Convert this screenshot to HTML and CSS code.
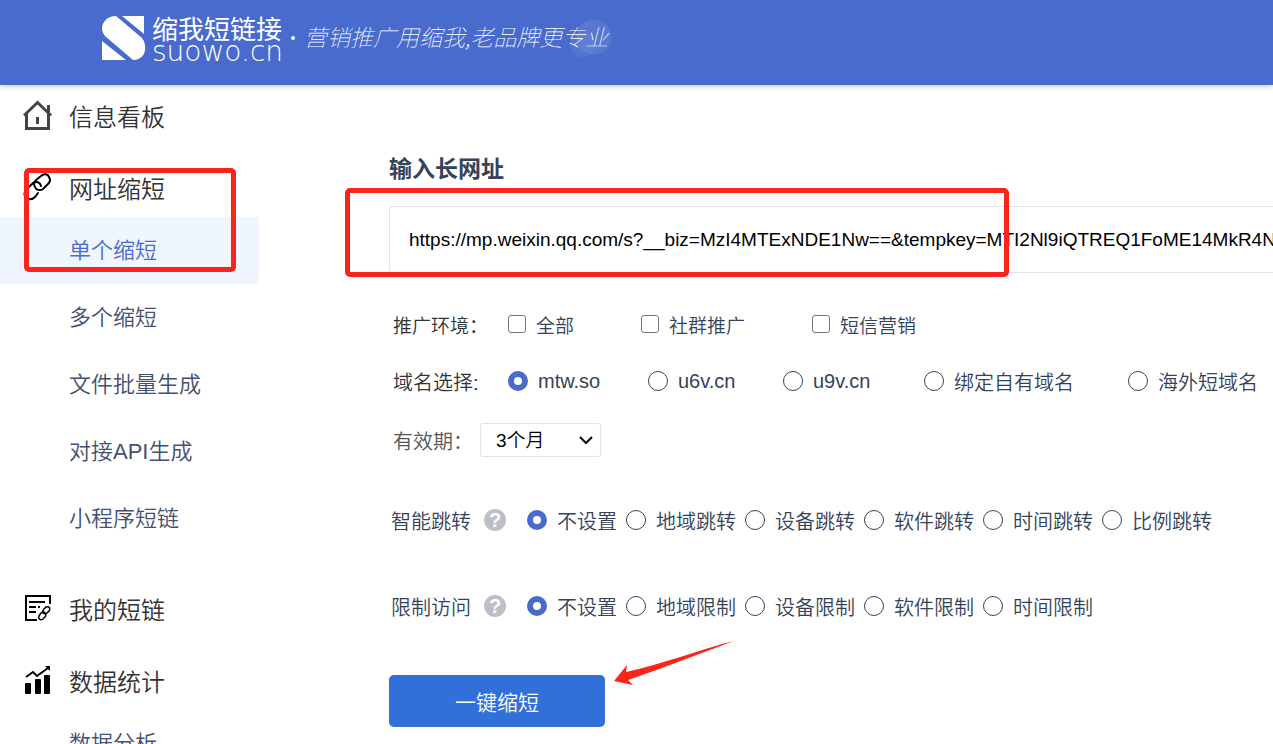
FILE: index.html
```html
<!DOCTYPE html>
<html lang="zh-CN">
<head>
<meta charset="UTF-8">
<meta name="viewport" content="width=device-width, initial-scale=1.0">
<title>缩我短链接</title>
<link rel="stylesheet" href="styles.css">
</head>
<body>

<header class="header">
    <a class="logo" href="#">
        <svg class="logo-mark" width="44" height="44" viewBox="0 0 44 44" fill="#fff">
            <path d="M20 0H42V18Z"/>
            <path d="M14 0L40 22C46 30 44 44 31 44L3 20C-4 12 2 0 14 0Z"/>
            <path d="M0 25L24 44H0Z"/>
        </svg>
        <span class="logo-text">
            <span class="logo-cn">缩我短链接</span>
            <span class="logo-en">suowo.cn</span>
        </span>
    </a>
    <span class="dot"></span>
    <p class="slogan">营销推广用缩我,老品牌更专业</p>
</header>

<div class="layout">
    <nav class="sidebar">
        <a class="menu-title" href="#">
            <svg width="30" height="30" viewBox="0 0 30 30" fill="none" stroke="#444" stroke-width="3">
                <path d="M1 15.500L14.500 2.500L28 15.500"/>
                <path d="M3.500 13V28.500H25.500V13M25.500 5V12"/>
                <path d="M14.500 17V24"/>
            </svg>
            信息看板
        </a>
        <a class="menu-title" href="#">
            <svg width="30" height="30" viewBox="0 0 30 30" fill="none" stroke="#000" stroke-width="2" stroke-linecap="round">
                <path d="M12 15C10 12 11 10 13 8L18 4C21 1 25 2 26 5C28 8 27 10 25 12L20 17C17 19 13 18 12 15"/>
                <path d="M18 14C17 10 13 9 10 11L4 17C1 20 1 23 3 25C5 28 9 28 12 25L15 21"/>
            </svg>
            网址缩短
        </a>
        <ul class="submenu">
            <li><a class="active" href="#">单个缩短</a></li>
            <li><a href="#">多个缩短</a></li>
            <li><a href="#">文件批量生成</a></li>
            <li><a href="#">对接API生成</a></li>
            <li><a href="#">小程序短链</a></li>
        </ul>
        <a class="menu-title" href="#">
            <svg width="30" height="30" viewBox="0 0 30 30" fill="none" stroke="#000" stroke-width="2">
                <path d="M14 27H3V3H27V11"/>
                <path d="M6 9H22M6 14H13M15 14H17M6 19H13"/>
                <path d="M20 20C19 18 20 17 21 16L23 14C26 13 28 15 26 18L24 20C23 21 21 21 20 20Z" stroke-width="1.500"/>
                <path d="M22 20C21 18 19 19 18 20L16 23C15 25 17 28 20 26L22 24C23 23 23 21 22 20Z" stroke-width="1.500"/>
            </svg>
            我的短链
        </a>
        <a class="menu-title" href="#">
            <svg width="30" height="30" viewBox="0 0 30 30" fill="#000">
                <rect x="2" y="18" width="6" height="11" rx="1"/>
                <rect x="12" y="14" width="6" height="15" rx="1"/>
                <rect x="21" y="10" width="6" height="19" rx="1"/>
                <path d="M3 12L10 7L14 11L25 3" fill="none" stroke="#000" stroke-width="2"/>
                <path d="M22 1H27V6Z"/>
            </svg>
            数据统计
        </a>
        <ul class="submenu">
            <li><a href="#">数据分析</a></li>
        </ul>
        <div class="mark mark-menu"></div>
    </nav>

    <main class="main">
        <form class="form">
            <label class="form-title" for="longUrl">输入长网址</label>
            <div class="url-box">
                <input type="text" id="longUrl" name="longUrl" value="https://mp.weixin.qq.com/s?__biz=MzI4MTExNDE1Nw==&amp;tempkey=MTI2Nl9iQTREQ1FoME14MkR4NXZKb2Rk">
                <div class="mark mark-url"></div>
            </div>

            <div class="row row-env">
                <span class="name">推广环境：</span>
                <div class="envs">
                    <label><input type="checkbox" name="env">全部</label>
                    <label><input type="checkbox" name="env">社群推广</label>
                    <label><input type="checkbox" name="env">短信营销</label>
                </div>
            </div>

            <div class="row row-domain">
                <span class="name">域名选择:</span>
                <div class="domains">
                    <label><input type="radio" name="domain" checked>mtw.so</label>
                    <label><input type="radio" name="domain">u6v.cn</label>
                    <label><input type="radio" name="domain">u9v.cn</label>
                    <label><input type="radio" name="domain">绑定自有域名</label>
                    <label><input type="radio" name="domain">海外短域名</label>
                </div>
            </div>

            <div class="row row-expire">
                <label class="name-expire" for="expire">有效期：</label>
                <select id="expire" name="expire">
                    <option>3个月</option>
                    <option>6个月</option>
                    <option>1年</option>
                </select>
            </div>

            <div class="row row-jump">
                <span class="name-set">智能跳转</span>
                <span class="help">?</span>
                <div class="options">
                    <label><input type="radio" name="jump" checked>不设置</label>
                    <label><input type="radio" name="jump">地域跳转</label>
                    <label><input type="radio" name="jump">设备跳转</label>
                    <label><input type="radio" name="jump">软件跳转</label>
                    <label><input type="radio" name="jump">时间跳转</label>
                    <label><input type="radio" name="jump">比例跳转</label>
                </div>
            </div>

            <div class="row row-limit">
                <span class="name-set">限制访问</span>
                <span class="help">?</span>
                <div class="options">
                    <label><input type="radio" name="limit" checked>不设置</label>
                    <label><input type="radio" name="limit">地域限制</label>
                    <label><input type="radio" name="limit">设备限制</label>
                    <label><input type="radio" name="limit">软件限制</label>
                    <label><input type="radio" name="limit">时间限制</label>
                </div>
            </div>

            <div class="submit-box">
                <button type="submit" class="submit">一键缩短</button>
                <svg class="arrow" width="122" height="46" viewBox="0 0 122 46" fill="#fb2418">
                    <path d="M1 41L14 25L13 32C50 24 85 10 121 1C85 14 50 28 15 40L20 45Z"/>
                </svg>
            </div>
        </form>
    </main>
</div>

</body>
</html>
```

FILE: styles.css
```css
* {
    box-sizing: border-box;
}
body {
    display: flex;
    flex-direction: column;
    height: 100vh;
    margin: 0;
    overflow: hidden;
    background: #fff;
    color: #34435a;
    font-family: "Liberation Sans", "Noto Sans CJK SC", sans-serif;
    font-size: 20px;
    font-weight: 350;
}
a {
    color: inherit;
    text-decoration: none;
}

/* header */
.header {
    display: flex;
    flex: none;
    align-items: center;
    height: 85px;
    padding: 0 102px 9px;
    background: #496bcd;
    box-shadow: 0 1px 6px rgba(0, 0, 0, 0.25);
    color: #fff;
    z-index: 1;
}
.logo {
    display: flex;
    align-items: center;
    gap: 6px;
}
.logo-text {
    display: flex;
    flex-direction: column;
}
.logo-cn {
    font-family: "Noto Sans CJK SC", sans-serif;
    font-size: 26px;
    font-weight: 400;
    line-height: 28px;
}
.logo-en {
    font-family: "DejaVu Sans", sans-serif;
    font-size: 28px;
    font-weight: 200;
    line-height: 20px;
}
.dot {
    width: 4px;
    height: 4px;
    margin: 0 9px 0 8px;
    border-radius: 50%;
    background: #fff;
}
.slogan {
    margin: 0 0 4px;
    padding-right: 10px;
    font-family: "Noto Sans CJK SC", sans-serif;
    font-size: 23px;
    font-style: italic;
    font-weight: 100;
    line-height: 46px;
    background:
        radial-gradient(circle at 290px 24px, rgba(255, 255, 255, 0.08) 17px, transparent 18px),
        radial-gradient(circle at 279px 32px, rgba(255, 255, 255, 0.06) 12px, transparent 13px);
}

.layout {
    display: flex;
    flex: 1;
    min-height: 0;
}

/* sidebar */
.sidebar {
    position: relative;
    flex: none;
    width: 259px;
    padding-top: 2px;
}
.menu-title {
    display: flex;
    align-items: center;
    gap: 16px;
    height: 56px;
    margin-bottom: 16px;
    padding-left: 23px;
    color: #333;
    font-size: 24px;
}
.submenu {
    margin: -14px 0 28px;
    padding: 0;
    list-style: none;
}
.submenu a {
    display: block;
    padding-left: 69px;
    color: #454f70;
    font-size: 22px;
    line-height: 67px;
}
.submenu .active {
    background: #eff6fd;
    color: #496bcd;
}

/* form */
.main {
    flex: 1;
    min-width: 0;
    padding: 66px 0 0 130px;
}
.form-title {
    display: block;
    margin-bottom: 19px;
    font-size: 23px;
    font-weight: bold;
    line-height: 36px;
}
.url-box {
    position: relative;
}
.url-box input {
    display: block;
    width: 100%;
    height: 67px;
    padding: 0 0 0 19px;
    border: 1px solid #e4e4e4;
    border-right: none;
    border-radius: 4px 0 0 4px;
    background: #fff;
    color: #000;
    font-family: inherit;
    font-size: 19px;
}
.row {
    display: flex;
    align-items: center;
    height: 30px;
    white-space: nowrap;
}
.row label {
    display: flex;
    align-items: center;
    gap: 10px;
}
.row-env {
    margin-top: 36px;
    font-size: 19px;
}
.row-domain {
    margin-top: 27px;
}
.row-expire {
    height: 34px;
    margin-top: 27px;
}
.row-jump {
    margin-top: 48px;
}
.row-limit {
    margin-top: 56px;
}
.name {
    width: 119px;
    padding-left: 4px;
    color: #333;
}
.row .name-expire {
    width: 91px;
    padding-left: 4px;
    color: #555;
}
.name-set {
    width: 95px;
    padding-left: 2px;
}
.envs {
    display: flex;
    gap: 67px;
}
.domains {
    display: grid;
    grid-template-columns: 140px 135px 141px 204px auto;
}
.options {
    display: flex;
    gap: 9px;
}
input[type="checkbox"] {
    width: 18px;
    height: 18px;
    margin: 0;
}
input[type="checkbox"]:not(:checked) {
    appearance: none;
    border: 1px solid #767676;
    border-radius: 3px;
    background: #fff;
}
input[type="radio"] {
    width: 20px;
    height: 20px;
    margin: 0;
    appearance: none;
    border: 1px solid #34435a;
    border-radius: 50%;
    background: #fff;
}
input[type="radio"]:checked {
    border: 6px solid #496bcd;
}
select {
    width: 121px;
    height: 34px;
    padding: 0 24px 0 15px;
    appearance: none;
    border: 1px solid #e4e4e4;
    border-radius: 3px;
    background: #fff url("data:image/svg+xml,%3Csvg xmlns='http://www.w3.org/2000/svg' width='14' height='10' fill='none' stroke='black' stroke-width='2'%3E%3Cpath d='M1 2L7 8L13 2'/%3E%3C/svg%3E") no-repeat right 7px center;
    color: #000;
    font-family: inherit;
    font-size: 19px;
    font-weight: 350;
}
.help {
    width: 22px;
    height: 22px;
    margin-right: 21px;
    border-radius: 50%;
    background: #bcbfc7;
    color: #fff;
    font-size: 20px;
    font-weight: bold;
    line-height: 22px;
    text-align: center;
}
.submit-box {
    position: relative;
    margin-top: 54px;
}
.submit {
    width: 216px;
    height: 52px;
    border: none;
    border-radius: 5px;
    background: #316fd9;
    color: #fff;
    font-family: inherit;
    font-size: 21px;
    font-weight: 350;
    cursor: pointer;
}

/* red marks lying over the page */
.mark {
    position: absolute;
    border: 5px solid #f9251b;
    border-radius: 5px;
    pointer-events: none;
}
.mark-menu {
    top: 83px;
    left: 24px;
    width: 212px;
    height: 104px;
}
.mark-url {
    top: -18px;
    left: -44px;
    width: 664px;
    height: 89px;
}
.arrow {
    position: absolute;
    top: -35px;
    left: 224px;
}
```
